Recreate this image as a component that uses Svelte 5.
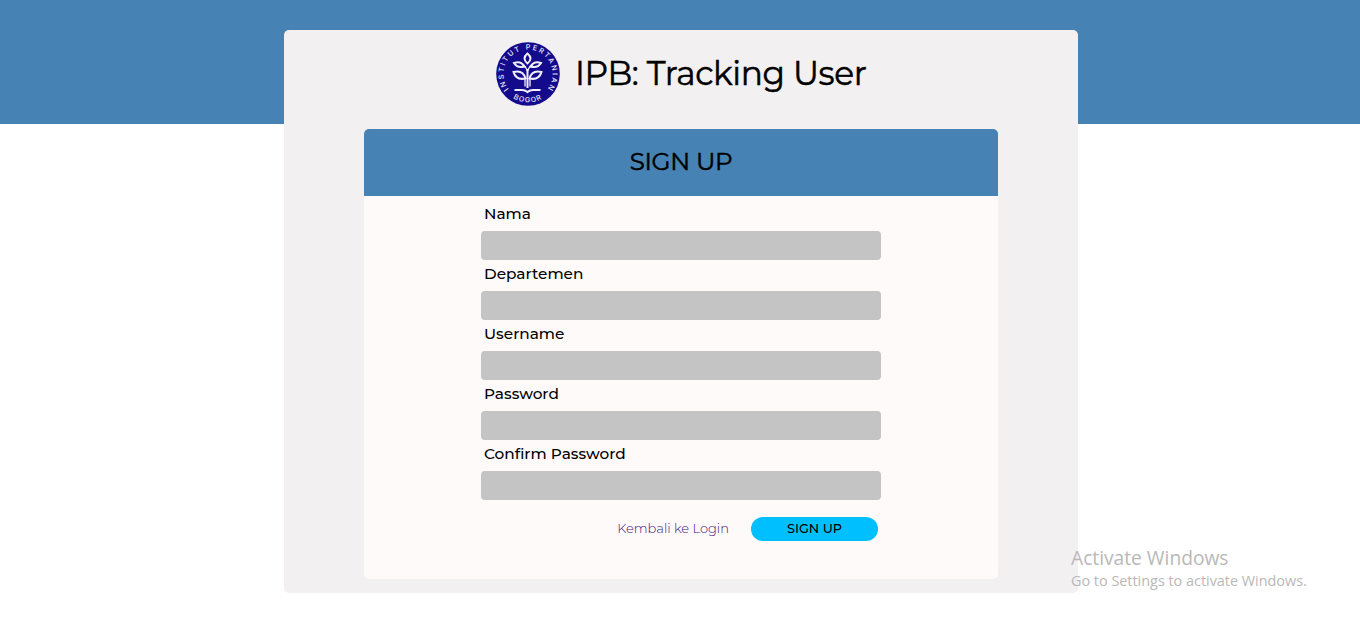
<script>
  const fields = [
    { id: 'nama', label: 'Nama', type: 'text' },
    { id: 'departemen', label: 'Departemen', type: 'text' },
    { id: 'username', label: 'Username', type: 'text' },
    { id: 'password', label: 'Password', type: 'password' },
    { id: 'confirm', label: 'Confirm Password', type: 'password' }
  ];
</script>

<div class="page">
  <main class="card">
    <header class="brand">
      <svg class="logo" viewBox="0 0 64 64" aria-hidden="true">
        <defs>
          <path id="ring-top" d="M13 47.5 A24.5 24.5 0 1 1 51 47.5" />
          <path id="ring-bottom" d="M10 50 A28.4 28.4 0 0 0 54 50" />
        </defs>
        <circle cx="32" cy="32" r="31.8" fill="#130b8c" />
        <g class="ring">
          <text><textPath href="#ring-top" startOffset="0.5" textLength="108">INSTITUT PERTANIAN</textPath></text>
          <text><textPath href="#ring-bottom" startOffset="9.5" textLength="30">BOGOR</textPath></text>
        </g>
        <g fill="none" stroke="#f1f0fa" stroke-width="2">
          <path d="M31.5 11.5 Q25.5 16.5 31.5 21.5 Q37.5 16.5 31.5 11.5Z" />
          <path d="M28.5 24.5 Q25 18.5 18 21 Q21.5 26.5 28.5 24.5Z" />
          <path d="M34.5 24.5 Q38 18.5 45 21 Q41.5 26.5 34.5 24.5Z" />
          <path d="M29.5 36.5 Q27 27.5 17.5 30 Q20 38.5 29.5 36.5Z" />
          <path d="M33.5 36.5 Q36 27.5 45.5 30 Q43 38.5 33.5 36.5Z" />
          <path d="M26 22 Q30 24.5 31.5 29 Q33 24.5 37 22" stroke-width="1.5" />
          <path d="M31.5 27 V46" stroke-width="2" />
          <path d="M29 37 V44.5 M34 37 V44.5" stroke-width="1.3" />
          <path d="M18.5 48 H26 Q29 48 31.5 50 Q34 48 37 48 H44.5" stroke-width="2.2" />
        </g>
      </svg>
      <h1>IPB: Tracking User</h1>
    </header>

    <section class="panel">
      <h2>SIGN UP</h2>
      <form>
        {#each fields as field}
          <label for={field.id}>{field.label}</label>
          <input id={field.id} type={field.type} />
        {/each}
        <div class="actions">
          <a href="#login">Kembali ke Login</a>
          <button type="button">SIGN UP</button>
        </div>
      </form>
    </section>
  </main>

  <aside class="watermark">
    <p class="big">Activate Windows</p>
    <p class="small">Go to Settings to activate Windows.</p>
  </aside>
</div>

<style>
  :global(body) { margin: 0; background: #fff; }
  .page {
    position: relative;
    box-sizing: border-box;
    height: 620px;
    padding: 30px 282px 0 284px;
    overflow: hidden;
    background: linear-gradient(#4682b4 124px, #fff 124px);
    font-family: Montserrat, Inter, sans-serif;
    color: #000;
  }
  .card {
    box-sizing: border-box;
    height: 563px;
    padding: 12px 80px 0;
    border-radius: 5px;
    background: #f2f0f1;
  }
  .brand { display: flex; height: 87px; padding-left: 132px; }
  .logo { width: 64px; height: 64px; flex: none; }
  .ring { fill: #d9d7f0; font: 600 7.2px Inter, sans-serif; }
  h1 {
    margin: 0 0 0 15px;
    font-size: 32.8px;
    letter-spacing: -0.35px;
    line-height: 62px;
    font-weight: 400;
    white-space: nowrap;
    -webkit-text-stroke: 0.5px #000;
  }
  .panel { height: 450px; border-radius: 5px; overflow: hidden; background: #fffafa; }
  h2 {
    height: 67px;
    margin: 0;
    background: #4682b4;
    text-align: center;
    font-size: 24.5px;
    letter-spacing: -0.3px;
    line-height: 65px;
    font-weight: 400;
    -webkit-text-stroke: 0.5px #000;
  }
  form { width: 400px; margin: 0 auto; }
  label {
    display: block;
    box-sizing: border-box;
    height: 31px;
    padding: 1px 0 0 3px;
    font-size: 15.3px;
    line-height: 26px;
    font-weight: 500;
  }
  form label:first-child { height: 35px; padding-top: 5px; }
  input {
    display: block;
    box-sizing: border-box;
    width: 400px;
    height: 29px;
    margin: 0;
    padding: 0 8px;
    border: 0;
    border-radius: 4px;
    background: #c4c4c4;
  }
  .actions { display: flex; justify-content: flex-end; gap: 22px; margin: 17px 3px 0 0; height: 24px; }
  a { color: #40107a; text-decoration: none; font-size: 13px; line-height: 23px; font-weight: 300; }
  button {
    width: 127px;
    height: 24px;
    padding: 0 0 2px;
    border: 0;
    border-radius: 12px;
    background: #00bfff;
    color: #000;
    font: 500 12.8px Montserrat, Inter, sans-serif;
  }
  .watermark { position: absolute; left: 1071px; top: 545px; color: #b9b8b8; font-family: "Segoe UI", "Open Sans", sans-serif; }
  p { margin: 0; white-space: nowrap; }
  .big { font-size: 19.2px; line-height: 26px; }
  .small { font-size: 14.4px; line-height: 20px; }
</style>
